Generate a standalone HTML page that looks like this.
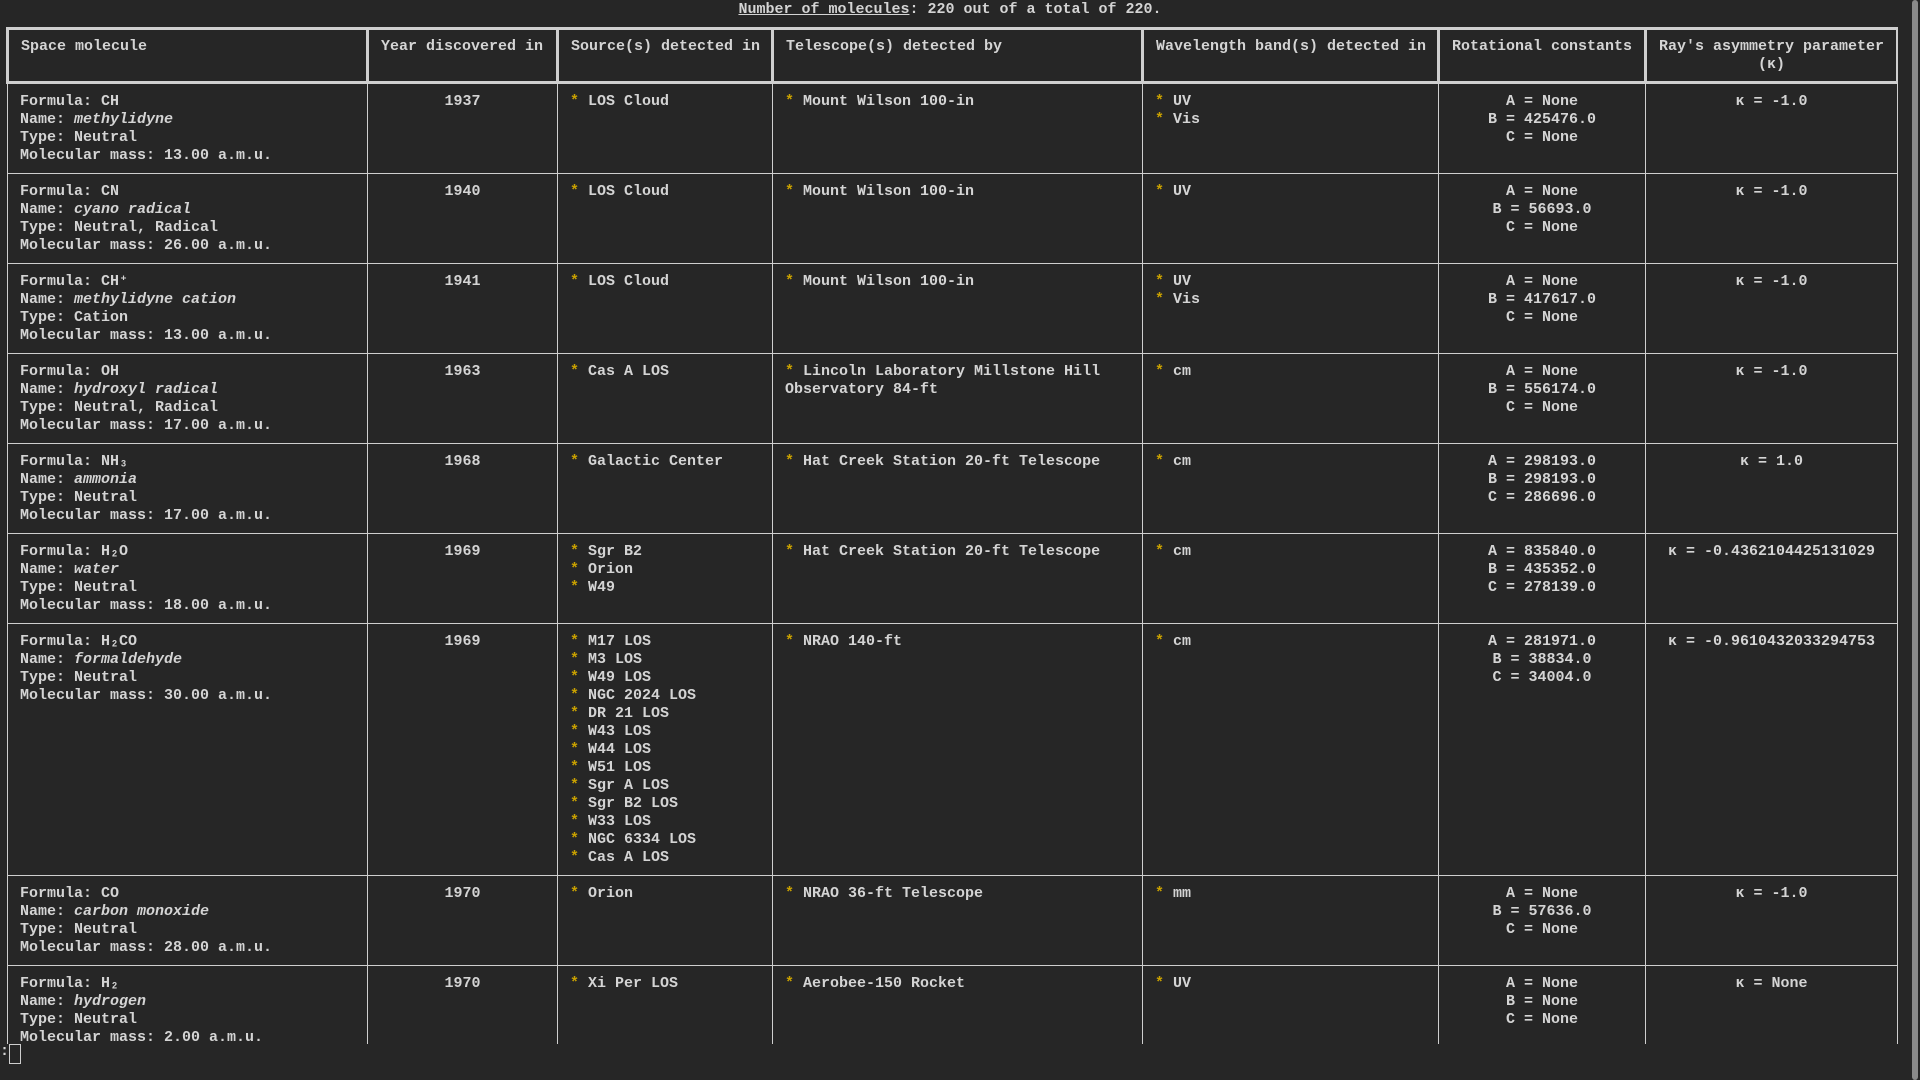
<!DOCTYPE html>
<html><head><meta charset="utf-8"><style>
html,body{margin:0;padding:0;background:#262626;width:1920px;height:1080px;overflow:hidden}
body{font-family:"Liberation Mono","DejaVu Sans Mono",monospace;font-size:15px;line-height:18px;color:#d4d4d4;font-weight:bold;position:relative}
.title{position:absolute;top:1px;left:-10px;width:1920px;text-align:center}
.title u{text-decoration:underline}
.wrap{position:absolute;left:4px;top:27px;width:1894px;height:1017px;overflow:hidden}
table{border-collapse:collapse;table-layout:fixed;width:1890px;margin-left:2px}
td,th{border:1px solid #cfcfcf;vertical-align:top;padding:9px 12px 8px 12px;text-align:left;font-weight:bold;white-space:pre}
th{border:3px solid #cfcfcf;height:36px;padding:8px 6px 7px 12px;font-weight:bold;white-space:nowrap;overflow:hidden}
th.c{white-space:normal;text-align:center;padding:8px 4px 7px 4px}
tr.r td{height:71px}
tr.big td{height:233px}
.c{text-align:center}
i{font-style:italic}
.s{color:#c9a100}
.cur{position:absolute;left:0;top:1043px;font-size:15px}
.box{position:absolute;left:9px;top:1044px;width:10px;height:18px;border:1px solid #cfcfcf}
.sb{position:absolute;left:1912px;top:0;width:6px;height:1080px;background:#8a8a8a;border-radius:3px}
</style></head><body>
<div class="title"><u>Number of molecules</u>: 220 out of a total of 220.</div>
<div class="wrap"><table>
<colgroup><col style="width:360px"><col style="width:190px"><col style="width:215px"><col style="width:370px"><col style="width:296px"><col style="width:207px"><col style="width:252px"></colgroup>
<tr><th>Space molecule</th><th>Year discovered in</th><th>Source(s) detected in</th><th>Telescope(s) detected by</th><th>Wavelength band(s) detected in</th><th>Rotational constants</th><th class="c">Ray's asymmetry parameter<br>(κ)</th></tr>
<tr class="r"><td>Formula: CH
Name: <i>methylidyne</i>
Type: Neutral
Molecular mass: 13.00 a.m.u.</td><td class="c">1937</td><td><span class="s">*</span> LOS Cloud</td><td><span class="s">*</span> Mount Wilson 100-in</td><td><span class="s">*</span> UV
<span class="s">*</span> Vis</td><td class="c">A = None
B = 425476.0
C = None</td><td class="c">κ = -1.0</td></tr>
<tr class="r"><td>Formula: CN
Name: <i>cyano radical</i>
Type: Neutral, Radical
Molecular mass: 26.00 a.m.u.</td><td class="c">1940</td><td><span class="s">*</span> LOS Cloud</td><td><span class="s">*</span> Mount Wilson 100-in</td><td><span class="s">*</span> UV</td><td class="c">A = None
B = 56693.0
C = None</td><td class="c">κ = -1.0</td></tr>
<tr class="r"><td>Formula: CH⁺
Name: <i>methylidyne cation</i>
Type: Cation
Molecular mass: 13.00 a.m.u.</td><td class="c">1941</td><td><span class="s">*</span> LOS Cloud</td><td><span class="s">*</span> Mount Wilson 100-in</td><td><span class="s">*</span> UV
<span class="s">*</span> Vis</td><td class="c">A = None
B = 417617.0
C = None</td><td class="c">κ = -1.0</td></tr>
<tr class="r"><td>Formula: OH
Name: <i>hydroxyl radical</i>
Type: Neutral, Radical
Molecular mass: 17.00 a.m.u.</td><td class="c">1963</td><td><span class="s">*</span> Cas A LOS</td><td><span class="s">*</span> Lincoln Laboratory Millstone Hill
Observatory 84-ft</td><td><span class="s">*</span> cm</td><td class="c">A = None
B = 556174.0
C = None</td><td class="c">κ = -1.0</td></tr>
<tr class="r"><td>Formula: NH₃
Name: <i>ammonia</i>
Type: Neutral
Molecular mass: 17.00 a.m.u.</td><td class="c">1968</td><td><span class="s">*</span> Galactic Center</td><td><span class="s">*</span> Hat Creek Station 20-ft Telescope</td><td><span class="s">*</span> cm</td><td class="c">A = 298193.0
B = 298193.0
C = 286696.0</td><td class="c">κ = 1.0</td></tr>
<tr class="r"><td>Formula: H₂O
Name: <i>water</i>
Type: Neutral
Molecular mass: 18.00 a.m.u.</td><td class="c">1969</td><td><span class="s">*</span> Sgr B2
<span class="s">*</span> Orion
<span class="s">*</span> W49</td><td><span class="s">*</span> Hat Creek Station 20-ft Telescope</td><td><span class="s">*</span> cm</td><td class="c">A = 835840.0
B = 435352.0
C = 278139.0</td><td class="c">κ = -0.4362104425131029</td></tr>
<tr class="big"><td>Formula: H₂CO
Name: <i>formaldehyde</i>
Type: Neutral
Molecular mass: 30.00 a.m.u.</td><td class="c">1969</td><td><span class="s">*</span> M17 LOS
<span class="s">*</span> M3 LOS
<span class="s">*</span> W49 LOS
<span class="s">*</span> NGC 2024 LOS
<span class="s">*</span> DR 21 LOS
<span class="s">*</span> W43 LOS
<span class="s">*</span> W44 LOS
<span class="s">*</span> W51 LOS
<span class="s">*</span> Sgr A LOS
<span class="s">*</span> Sgr B2 LOS
<span class="s">*</span> W33 LOS
<span class="s">*</span> NGC 6334 LOS
<span class="s">*</span> Cas A LOS</td><td><span class="s">*</span> NRAO 140-ft</td><td><span class="s">*</span> cm</td><td class="c">A = 281971.0
B = 38834.0
C = 34004.0</td><td class="c">κ = -0.9610432033294753</td></tr>
<tr class="r"><td>Formula: CO
Name: <i>carbon monoxide</i>
Type: Neutral
Molecular mass: 28.00 a.m.u.</td><td class="c">1970</td><td><span class="s">*</span> Orion</td><td><span class="s">*</span> NRAO 36-ft Telescope</td><td><span class="s">*</span> mm</td><td class="c">A = None
B = 57636.0
C = None</td><td class="c">κ = -1.0</td></tr>
<tr class="r"><td>Formula: H₂
Name: <i>hydrogen</i>
Type: Neutral
Molecular mass: 2.00 a.m.u.</td><td class="c">1970</td><td><span class="s">*</span> Xi Per LOS</td><td><span class="s">*</span> Aerobee-150 Rocket</td><td><span class="s">*</span> UV</td><td class="c">A = None
B = None
C = None</td><td class="c">κ = None</td></tr>
</table></div>
<div class="cur">:</div><div class="box"></div>
<div class="sb"></div>
</body></html>
